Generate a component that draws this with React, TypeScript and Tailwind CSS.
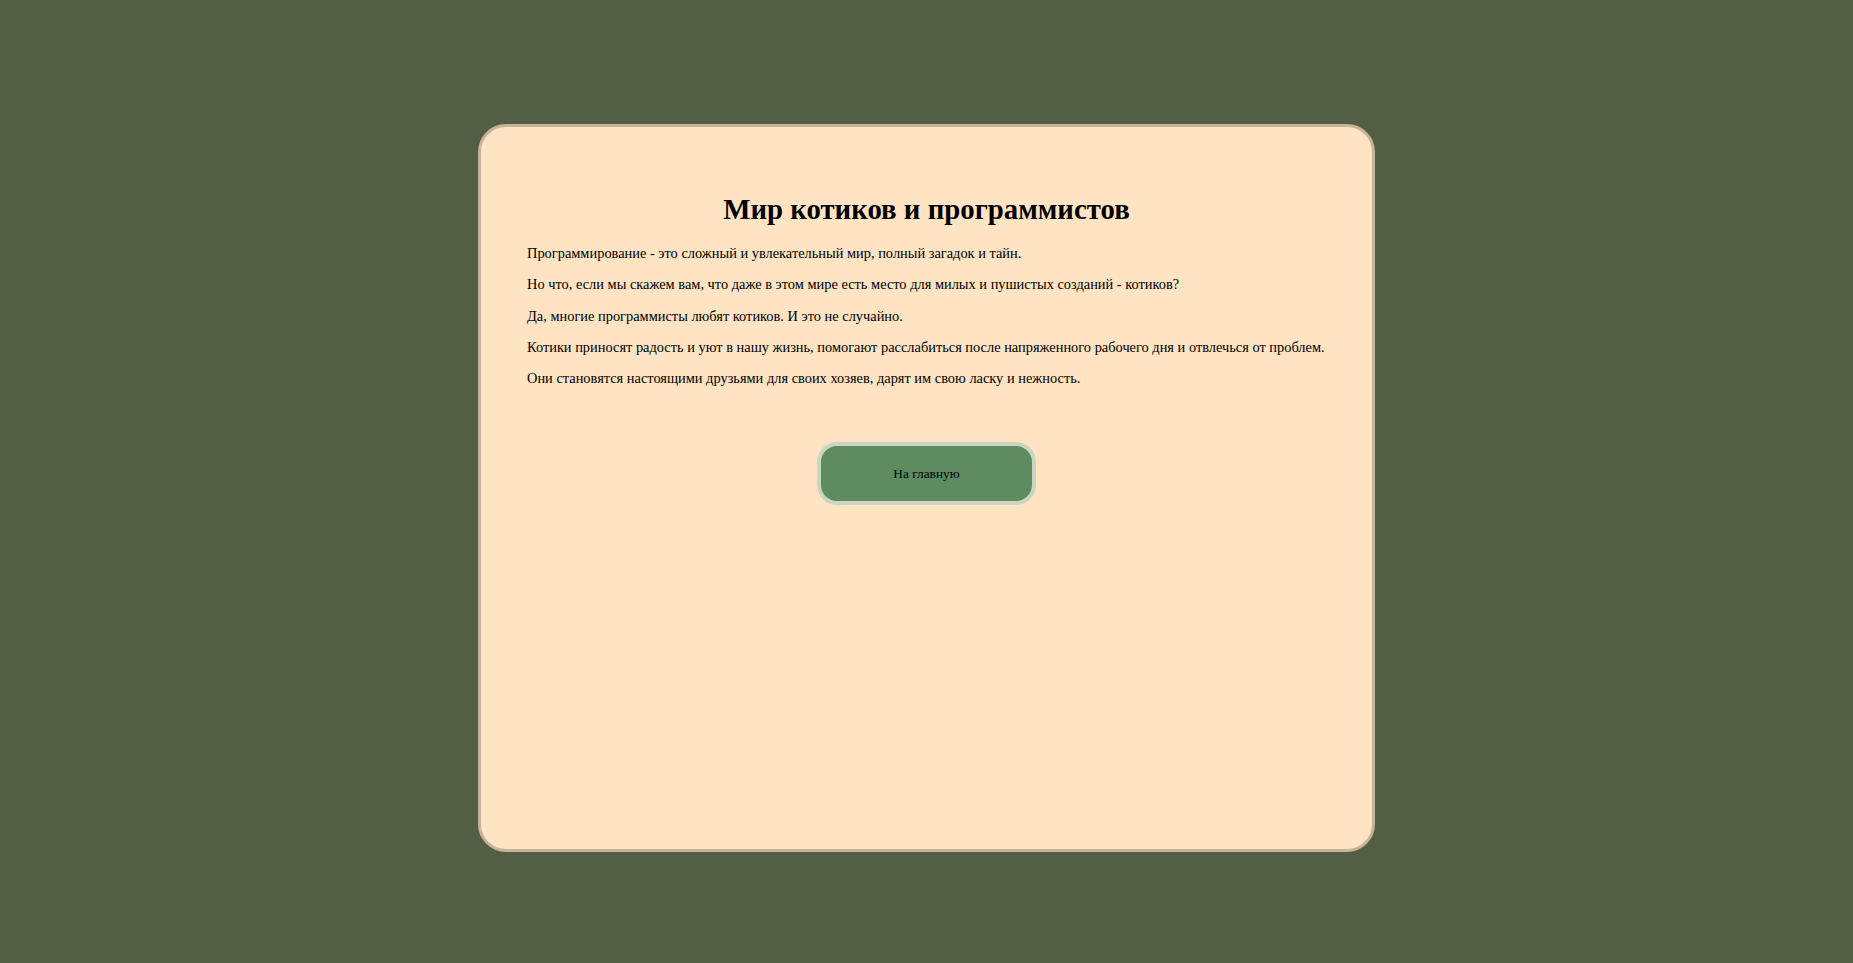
import React from "react";

const lines = [
  "Программирование - это сложный и увлекательный мир, полный загадок и тайн.",
  "Но что, если мы скажем вам, что даже в этом мире есть место для милых и пушистых созданий - котиков?",
  "Да, многие программисты любят котиков. И это не случайно.",
  "Котики приносят радость и уют в нашу жизнь, помогают расслабиться после напряженного рабочего дня и отвлечься от проблем.",
  "Они становятся настоящими друзьями для своих хозяев, дарят им свою ласку и нежность.",
];

export default function App() {
  return (
    <div className="min-h-screen bg-[#525f45] pt-[124px] font-['Liberation_Serif','Times_New_Roman',serif] text-black">
      <div className="mx-auto w-[897px] h-[728px] rounded-[28px] border-[3px] border-[#c9b29a] bg-[#ffe4c4] px-[46px] pt-[66px]">
        <h1 className="text-center text-[28.8px] leading-[32px] font-bold">Мир котиков и программистов</h1>
        <div className="mt-[13px] flex flex-col">
          {lines.map((line, i) => (
            <p key={i} className="text-[14.4px] leading-[31.3px]">
              {line}
            </p>
          ))}
        </div>
        <div className="mt-[48px] flex justify-center">
          <button className="w-[219px] h-[63px] rounded-[20px] border-4 border-[#cbd6c1] bg-[#5e8b60] text-[13.33px] text-black">
            На главную
          </button>
        </div>
      </div>
    </div>
  );
}
